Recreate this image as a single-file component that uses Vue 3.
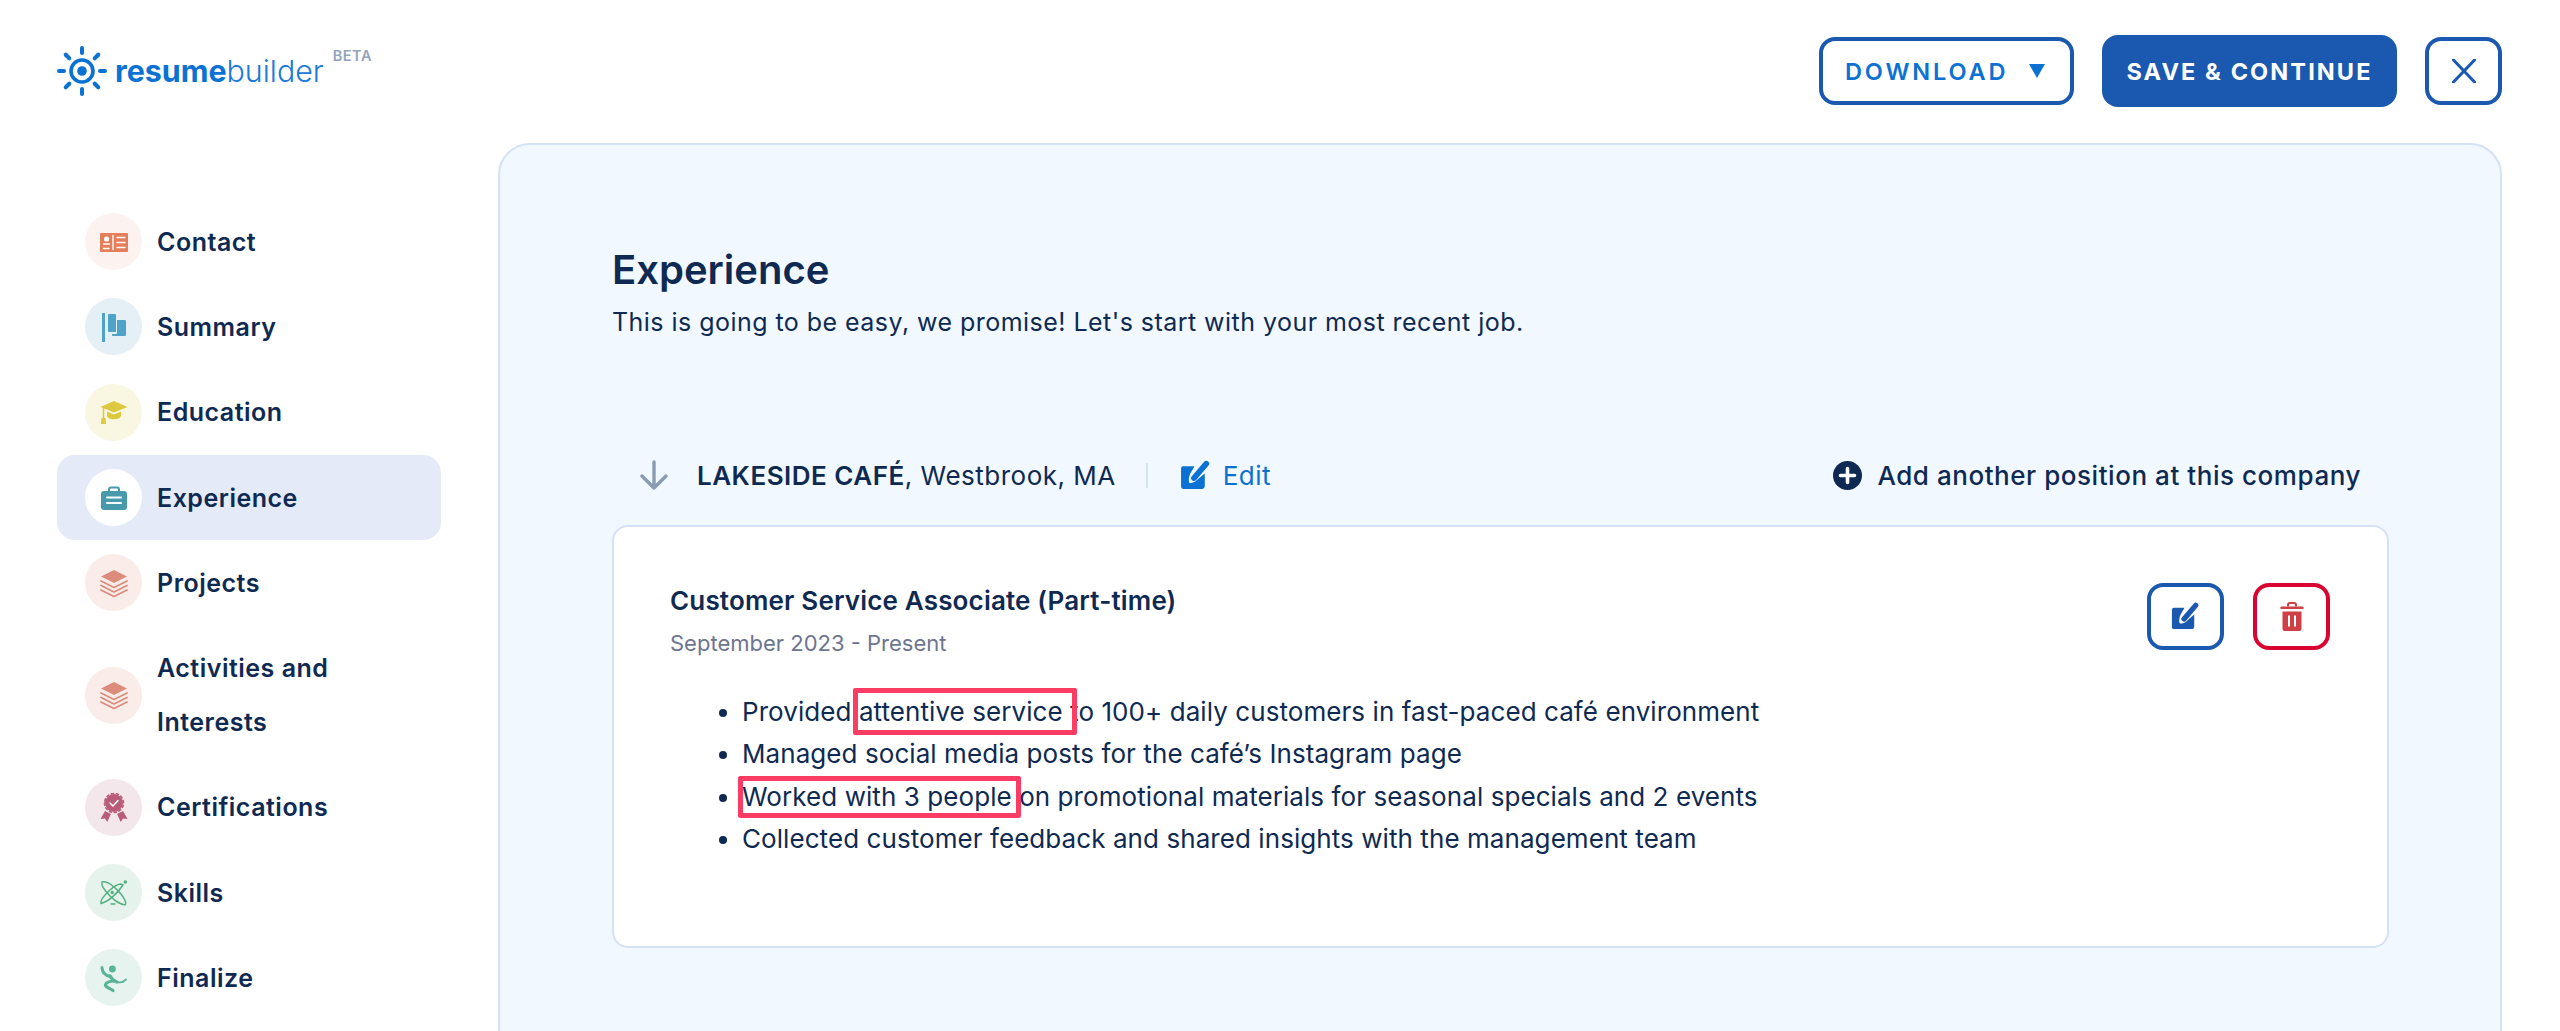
<script setup>
const nav = [
  { label: 'Contact', bg: '#fcf2ef', color: '#e57e5a', parts: [
    { d: 'M3 7h26a1 1 0 0 1 1 1v17a1 1 0 0 1-1 1H3a1 1 0 0 1-1-1V8a1 1 0 0 1 1-1z' },
    { d: 'M6 13a2.6 2.6 0 1 0 5.2 0a2.6 2.6 0 1 0-5.2 0z', fill: '#fff' },
    { d: 'M5.5 18h6M5.5 22.5h5.5M15 9.5v14M19 11.5h8M19 16.5h8M19 21.5h8', stroke: '#fff', sw: 1.4 }
  ] },
  { label: 'Summary', bg: '#e4eff6', color: '#4fa3c9', parts: [
    { d: 'M4 2h3v29H4z' },
    { d: 'M10 4a1 1 0 0 1 1-1h6a1 1 0 0 1 1 1v17h-7a1 1 0 0 1-1-1z' },
    { d: 'M19 9h8a1 1 0 0 1 1 1v14a1 1 0 0 1-1 1H15a1 1 0 0 1-1-1v-1h4a1 1 0 0 0 1-1z' }
  ] },
  { label: 'Education', bg: '#f9f7e2', color: '#dcc93f', parts: [
    { d: 'M16 5L29.5 11L16 16.5L2.5 11z' },
    { d: 'M9 15.5v4c0 2.4 3.2 3.8 7 3.8s7-1.4 7-3.8v-4l-7 3z' },
    { d: 'M5.5 12v10', stroke: 'self', sw: 1.6 },
    { d: 'M3.5 22h4l.5 6H3z' }
  ] },
  { label: 'Experience', active: true, bg: '#fff', color: '#4799ac', parts: [
    { d: 'M6 9h20a3 3 0 0 1 3 3v13a3 3 0 0 1-3 3H6a3 3 0 0 1-3-3V12a3 3 0 0 1 3-3z' },
    { d: 'M11 10V7.5a2 2 0 0 1 2-2h6a2 2 0 0 1 2 2V10', stroke: 'self', sw: 2 },
    { d: 'M9 15.5h14M9 21h14', stroke: '#fff', sw: 2 }
  ] },
  { label: 'Projects', bg: '#f9ece9', color: '#dd8c7c', parts: [
    { d: 'M16 3L29 9.5L16 16L3 9.5z' },
    { d: 'M3 14L16 20.5L29 14M3 18.5L16 25L29 18.5M3 23L16 29.5L29 23', stroke: 'self', sw: 1.8 }
  ] },
  { label: 'Activities and Interests', tall: true, bg: '#f9ece9', color: '#dd8c7c', parts: [
    { d: 'M16 3L29 9.5L16 16L3 9.5z' },
    { d: 'M3 14L16 20.5L29 14M3 18.5L16 25L29 18.5M3 23L16 29.5L29 23', stroke: 'self', sw: 1.8 }
  ] },
  { label: 'Certifications', bg: '#f4e7ec', color: '#b85c7a', parts: [
    { d: 'M7 12a9 9 0 1 0 18 0a9 9 0 1 0-18 0z' },
    { d: 'M6.5 12a9.5 9.5 0 1 0 19 0a9.5 9.5 0 1 0-19 0z', stroke: 'self', sw: 1.6, dash: '2.2 2.8' },
    { d: 'M12 12l3 3 5-5.5', stroke: '#fff', sw: 1.6 },
    { d: 'M7 20L2.5 28l4.4-.6 2.4 3.6 3.6-8z' },
    { d: 'M25 20L29.5 28l-4.4-.6-2.4 3.6-3.6-8z' }
  ] },
  { label: 'Skills', bg: '#e6f3ec', color: '#52b07f', parts: [
    { d: 'M4 5c5-2 14 6 19 12s5 10 4.5 10.5c-3 1-10-3-15-8S3 8 4 5z', stroke: 'self', sw: 1.5 },
    { d: 'M25 8C20 16 10 25 3 26.5c-1-3 4-9 9-13.5s9-6 11-6z', stroke: 'self', sw: 1.5 },
    { d: 'M25.5 5a1.8 1.8 0 1 0 3.6 0a1.8 1.8 0 1 0-3.6 0z' },
    { d: 'M12.5 15.5a1.7 1.7 0 1 0 3.4 0a1.7 1.7 0 1 0-3.4 0z' },
    { d: 'M13 27h4', stroke: 'self', sw: 1.3 }
  ] },
  { label: 'Finalize', bg: '#e6f3ef', color: '#59b397', parts: [
    { d: 'M11 7a3.4 3.4 0 1 0 6.8 0a3.4 3.4 0 1 0-6.8 0z' },
    { d: 'M4 5.5c0 5 3 8 8.5 9', stroke: 'self', sw: 3 },
    { d: 'M12 14c2 3.5 4 5 7 6', stroke: 'self', sw: 3.2 },
    { d: 'M19 20c3 1 6 .5 9-2.5', stroke: 'self', sw: 1.8 },
    { d: 'M17 19c-4 0-8.5 1-9.5 3.5s4 3.5 7.5 6', stroke: 'self', sw: 3.2 }
  ] }
]
const rays = [0, 45, 90, 135, 180, 225, 270, 315]
</script>

<template>
  <div class="page">
    <header class="top">
      <div class="brand">
        <svg class="sun" viewBox="0 0 50 50" width="50" height="50">
          <g fill="none" stroke="#0b72d4">
            <circle cx="25" cy="25" r="11" stroke-width="3.6" />
            <line v-for="r in rays" :key="r" x1="25" y1="2" x2="25" y2="7" stroke-width="4" stroke-linecap="round" :transform="`rotate(${r} 25 25)`" />
          </g>
          <circle cx="25" cy="25" r="4.8" fill="#0b72d4" />
        </svg>
        <span class="word"><b>resume</b>builder</span>
        <span class="beta">BETA</span>
      </div>
      <div class="actions">
        <button class="btn outline">DOWNLOAD
          <svg viewBox="0 0 16 14" width="16" height="14"><path d="M0 0h16L8 14z" fill="#0b72d4" /></svg>
        </button>
        <button class="btn solid">SAVE &amp; CONTINUE</button>
        <button class="btn close" aria-label="Close">
          <svg viewBox="0 0 24 24" width="24" height="24"><path d="M1.5 1L22.5 23M22.5 1L1.5 23" stroke="#1b59b0" stroke-width="3" stroke-linecap="round" /></svg>
        </button>
      </div>
    </header>

    <div class="body">
      <aside class="side">
        <div v-for="n in nav" :key="n.label" class="item" :class="{ active: n.active, tall: n.tall }">
          <span class="disc" :style="{ background: n.bg }">
            <svg viewBox="0 0 32 32" width="32" height="32">
              <path
                v-for="(p, i) in n.parts"
                :key="i"
                :d="p.d"
                :fill="p.stroke ? 'none' : (p.fill || n.color)"
                :stroke="p.stroke ? (p.stroke === 'self' ? n.color : p.stroke) : 'none'"
                :stroke-width="p.sw"
                :stroke-dasharray="p.dash"
                stroke-linecap="round"
                stroke-linejoin="round"
              />
            </svg>
          </span>
          <span class="label">{{ n.label }}</span>
        </div>
      </aside>

      <main class="panel">
        <h1>Experience</h1>
        <p class="sub">This is going to be easy, we promise! Let's start with your most recent job.</p>

        <div class="company">
          <div class="c-left">
            <svg class="arrow" viewBox="0 0 30 30" width="30" height="30"><path d="M15 2v26M3 16l12 12 12-12" fill="none" stroke="#8a9bb4" stroke-width="3.4" stroke-linecap="round" stroke-linejoin="round" /></svg>
            <span class="c-name"><b>LAKESIDE CAFÉ</b>, Westbrook, MA</span>
            <span class="divider"></span>
            <svg viewBox="0 0 32 32" width="33" height="33">
              <path d="M2 9a2 2 0 0 1 2-2h11l-4 7c-1.5 3-2 7-1 9 3 1 6-1 9-4l6-5v12a3 3 0 0 1-3 3H4a2 2 0 0 1-2-2z" fill="#0b72d4" />
              <path d="M14.5 18.5L26.5 4.5" stroke="#0b72d4" stroke-width="5.5" stroke-linecap="round" />
            </svg>
            <span class="edit">Edit</span>
          </div>
          <div class="c-right">
            <svg viewBox="0 0 29 29" width="29" height="29"><circle cx="14.5" cy="14.5" r="14.5" fill="#0f2a52" /><path d="M14.5 7.5v14M7.5 14.5h14" stroke="#fff" stroke-width="3.6" stroke-linecap="round" /></svg>
            <span>Add another position at this company</span>
          </div>
        </div>

        <section class="card">
          <div class="card-text">
            <h2>Customer Service Associate (Part-time)</h2>
            <div class="date">September 2023 - Present</div>
            <ul>
              <li>Provided <span class="mark one">attentive service</span> to 100+ daily customers in fast-paced café environment</li>
              <li>Managed social media posts for the café’s Instagram page</li>
              <li><span class="mark two">Worked with 3 people</span> on promotional materials for seasonal specials and 2 events</li>
              <li>Collected customer feedback and shared insights with the management team</li>
            </ul>
          </div>
          <div class="card-actions">
            <button class="square blue" aria-label="Edit">
              <svg viewBox="0 0 32 32" width="31" height="31">
                <path d="M2 9a2 2 0 0 1 2-2h11l-4 7c-1.5 3-2 7-1 9 3 1 6-1 9-4l6-5v12a3 3 0 0 1-3 3H4a2 2 0 0 1-2-2z" fill="#1b59b0" />
                <path d="M14.5 18.5L26.5 4.5" stroke="#1b59b0" stroke-width="5.5" stroke-linecap="round" />
              </svg>
            </button>
            <button class="square red" aria-label="Delete">
              <svg viewBox="0 0 24 30" width="24" height="30">
                <path d="M8 4.5V3a2 2 0 0 1 2-2h4a2 2 0 0 1 2 2v1.5" fill="none" stroke="#ce4045" stroke-width="2" />
                <path d="M1.5 4.5h21a1 1 0 0 1 1 1.5v1H.5V6a1 1 0 0 1 1-1.5z" fill="#ce4045" />
                <path d="M2.5 9.5h19V27a2 2 0 0 1-2 2h-15a2 2 0 0 1-2-2z" fill="#ce4045" />
                <path d="M9 13.5v11M15 13.5v11" stroke="#fff" stroke-width="2" />
              </svg>
            </button>
          </div>
        </section>
      </main>
    </div>
  </div>
</template>

<style>
html, body { margin: 0; overflow: hidden; background: #fff; }
</style>

<style scoped>
.page {
  width: 2560px;
  height: 1031px;
  overflow: hidden;
  font-family: Inter, "Liberation Sans", sans-serif;
  color: #0f2a52;
  background: #fff;
}
.top {
  height: 143px;
  box-sizing: border-box;
  padding: 35px 58px 0 57px;
  display: flex;
  justify-content: space-between;
  align-items: flex-start;
}
.brand { display: flex; align-items: center; height: 72px; position: relative; }
.word { margin-left: 8px; font-size: 30.4px; font-weight: 300; color: #1b7ad8; }
.word b { font-weight: 700; color: #0b72d4; }
.beta { align-self: flex-start; margin: 12px 0 0 9px; font-size: 14.5px; font-weight: 600; color: #94a3bd; letter-spacing: 0.5px; }
.actions { display: flex; align-items: center; height: 72px; gap: 28px; }
.btn {
  font-family: inherit;
  box-sizing: border-box;
  border-radius: 16px;
  background: #fff;
  padding: 0;
  display: flex;
  align-items: center;
  justify-content: center;
  font-size: 23.5px;
  letter-spacing: 2.1px;
  font-weight: 700;
}
.outline {
  width: 255px;
  height: 68px;
  border: 4px solid #1b59b0;
  color: #0b72d4;
  justify-content: flex-start;
  padding-left: 22px;
  gap: 20px;
  font-weight: 600;
  letter-spacing: 2.9px;
}
.solid { width: 295px; height: 72px; background: #1b59b0; border: 0; color: #fff; }
.close { width: 77px; height: 68px; border: 4px solid #1b59b0; }
.body { display: flex; align-items: flex-start; padding: 0 58px 0 57px; }
.side { width: 384px; margin-right: 57px; padding-top: 56px; flex: none; }
.item {
  min-height: 85.33px;
  box-sizing: border-box;
  padding-left: 28px;
  display: flex;
  align-items: center;
  gap: 15px;
  border-radius: 18px;
}
.item.active { background: #e4eaf7; }
.item.tall { min-height: 139px; }
.disc {
  width: 57px;
  height: 57px;
  flex: none;
  border-radius: 50%;
  display: flex;
  align-items: center;
  justify-content: center;
}
.label { font-size: 25px; font-weight: 600; line-height: 54px; width: 250px; letter-spacing: 0.5px; }
.panel {
  flex: 1;
  min-height: 1000px;
  box-sizing: border-box;
  border: 2px solid #d5e1f5;
  border-radius: 32px;
  background: #f1f8ff;
  padding: 102px 111px 0 112px;
}
h1 { margin: 0; font-size: 40px; font-weight: 600; line-height: 46px; }
.sub { margin: 9px 0 0; font-size: 25px; line-height: 40px; letter-spacing: 0.46px; }
.company {
  margin-top: 108px;
  height: 50px;
  padding: 0 28px 0 27px;
  display: flex;
  align-items: center;
  justify-content: space-between;
  font-size: 26px;
  letter-spacing: 0.5px;
}
.c-left, .c-right { display: flex; align-items: center; }
.c-name { margin-left: 28px; }
.c-name b { font-weight: 600; }
.divider { width: 2px; height: 25px; background: #d5e1f5; margin: 0 31px 0 30px; }
.edit { color: #0b72d4; margin-left: 11px; }
.c-right { gap: 15px; font-weight: 500; letter-spacing: 0.55px; }
.card {
  margin-top: 25px;
  box-sizing: border-box;
  height: 423px;
  background: #fff;
  border: 2px solid #d5e1f5;
  border-radius: 16px;
  padding: 56px 57px 56px 56px;
  display: flex;
  justify-content: space-between;
  align-items: flex-start;
}
h2 { margin: 0; font-size: 26px; font-weight: 600; line-height: 36px; letter-spacing: 0.17px; }
.date { margin-top: 6px; font-size: 22px; line-height: 36px; color: #6d7590; }
ul { margin: 29.5px 0 0; padding: 0 0 0 72px; font-size: 26px; line-height: 42.5px; letter-spacing: 0.07px; }
.mark { position: relative; display: inline-block; }
.mark::after { content: ""; position: absolute; border: 5px solid #fb3d66; border-radius: 2px; }
.one::after { top: -3px; bottom: -2px; left: -6px; right: -14px; }
.two::after { top: 0; bottom: 0; left: -4px; right: -9px; }
.card-actions { display: flex; gap: 29px; }
.square {
  width: 77px;
  height: 67px;
  box-sizing: border-box;
  background: #fff;
  border-radius: 16px;
  padding: 0;
  display: flex;
  align-items: center;
  justify-content: center;
}
.blue { border: 4px solid #1b59b0; }
.red { border: 4px solid #d9042f; }
</style>
